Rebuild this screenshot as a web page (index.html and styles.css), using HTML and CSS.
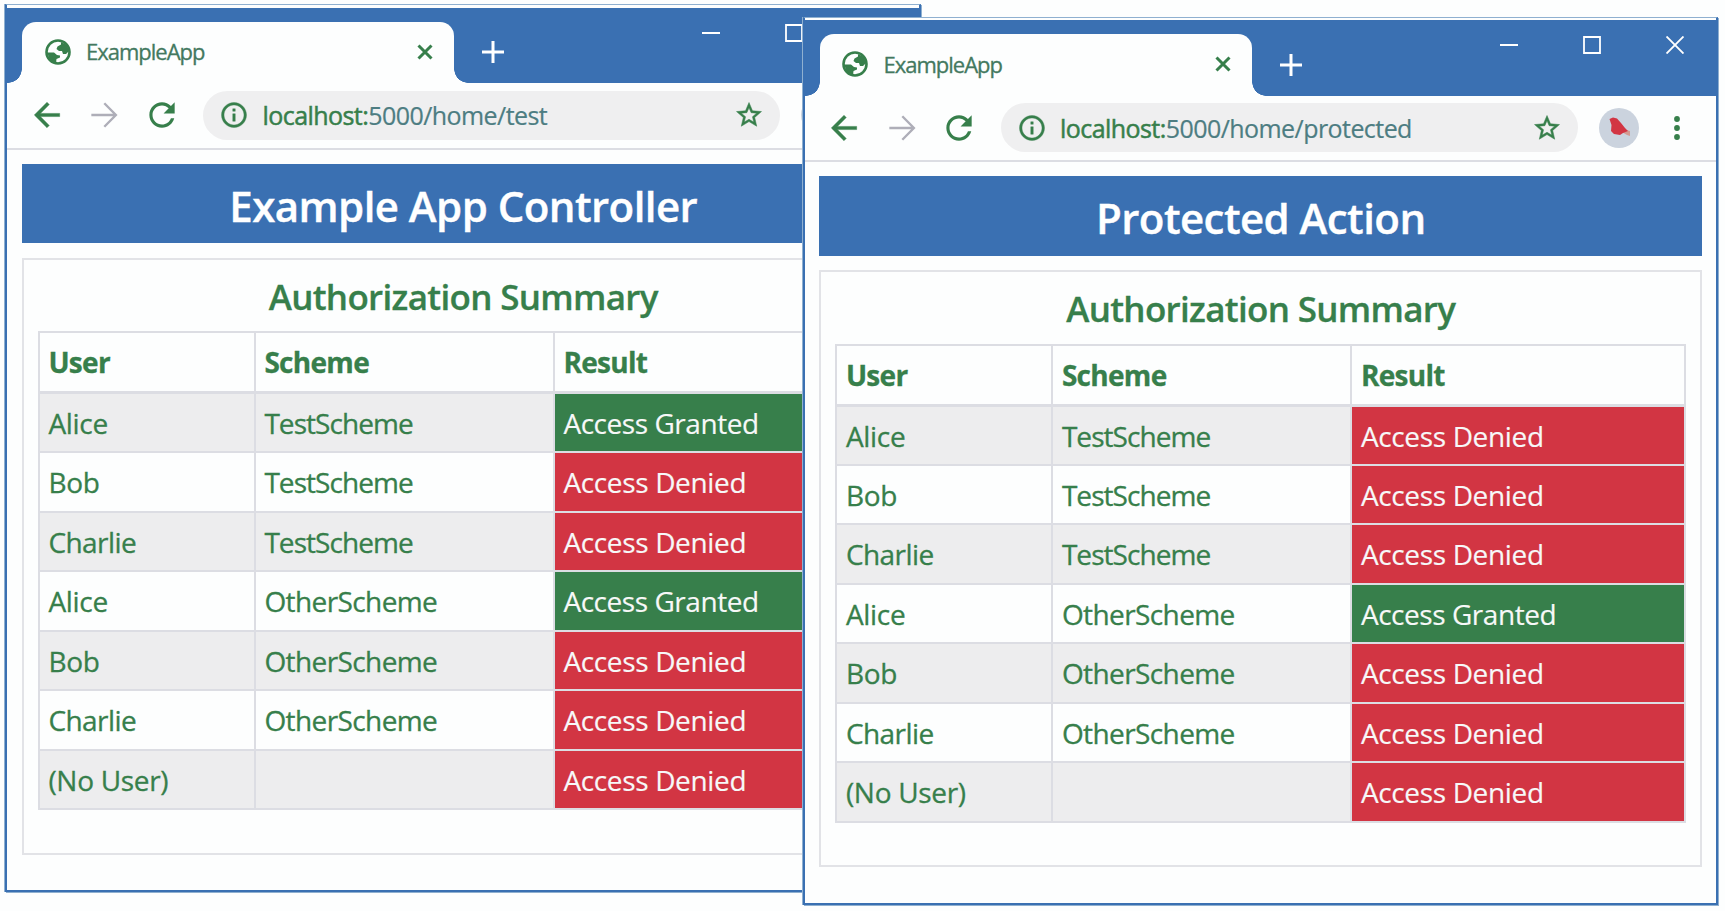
FILE: index.html
```
<!DOCTYPE html>
<html lang="en">
<head>
<meta charset="utf-8">
<title>ExampleApp</title>
<link rel="stylesheet" href="styles.css">
</head>
<body>
<svg class="defs" width="0" height="0">
  <symbol id="globe" viewBox="0 0 26 26"><circle cx="13" cy="13" r="11.5" fill="none" stroke="currentColor" stroke-width="2.6"/><path fill="currentColor" d="M16 3L16 5.500L12.500 7.500L11.500 10L14 12L17 12L18 15L21 15L24 12L22 6Z"/><path fill="currentColor" d="M2 13.500L9 13.500L12 16L15 16.500L15 18.500L11.500 20L11 24L5 21Z"/></symbol>
  <symbol id="close" viewBox="0 0 16 16"><path d="M1.500 1.500L14.500 14.500M14.500 1.500L1.500 14.500" fill="none" stroke="currentColor" stroke-width="3"/></symbol>
  <symbol id="plus" viewBox="0 0 22 22"><path d="M11 0V22M0 11H22" stroke="currentColor" stroke-width="3"/></symbol>
  <symbol id="min" viewBox="0 0 18 18"><path d="M0 9H18" stroke="currentColor" stroke-width="2"/></symbol>
  <symbol id="max" viewBox="0 0 18 18"><path d="M1 1H17V17H1Z" fill="none" stroke="currentColor" stroke-width="1.800"/></symbol>
  <symbol id="exit" viewBox="0 0 18 18"><path d="M.5 .5L17.500 17.500M17.500 .5L.5 17.500" stroke="currentColor" stroke-width="1.900"/></symbol>
  <symbol id="back" viewBox="0 0 24 24"><path fill="currentColor" stroke="currentColor" stroke-width=".3" d="M20 11H7.830l5.590-5.590L12 4l-8 8 8 8 1.410-1.410L7.830 13H20v-2z"/></symbol>
  <symbol id="forward" viewBox="0 0 24 24"><path fill="none" stroke="currentColor" stroke-width="1.500" d="M4 12H19M12.200 4.600L19.500 12L12.200 19.400"/></symbol>
  <symbol id="reload" viewBox="0 0 24 24"><path fill="currentColor" d="M17.650 6.350C16.200 4.900 14.210 4 12 4c-4.420 0-7.990 3.580-7.990 8s3.570 8 7.990 8c3.730 0 6.840-2.550 7.730-6h-2.080c-.82 2.330-3.040 4-5.650 4-3.310 0-6-2.690-6-6s2.690-6 6-6c1.660 0 3.140.69 4.220 1.780L13 11h7V4l-2.350 2.350z"/></symbol>
  <symbol id="info" viewBox="0 0 24 24"><path fill="currentColor" stroke="currentColor" stroke-width=".3" d="M11 7h2v2h-2zm0 4h2v6h-2zm1-9C6.480 2 2 6.480 2 12s4.480 10 10 10 10-4.480 10-10S17.520 2 12 2zm0 18c-4.410 0-8-3.590-8-8s3.590-8 8-8 8 3.590 8 8-3.590 8-8 8z"/></symbol>
  <symbol id="star" viewBox="0 0 24 24"><path fill="currentColor" stroke="currentColor" stroke-width=".4" d="M22 9.240l-7.190-.62L12 2 9.190 8.630 2 9.240l5.460 4.730L5.820 21 12 17.270 18.180 21l-1.630-7.030L22 9.240zM12 15.400l-3.760 2.270 1-4.280-3.320-2.880 4.380-.38L12 6.100l1.710 4.040 4.380.38-3.320 2.880 1 4.280L12 15.400z"/></symbol>
  <symbol id="bird" viewBox="0 0 40 40"><circle cx="20" cy="20" r="20" fill="#cbd3de"/><path fill="#d39a92" d="M24 21L31 23L31 28L28 27L23 24Z"/><path fill="#d23543" d="M10.500 11L14 9.500L18 10.500L22 15L26 20L29 23L24 25L21 27L15 26L12 23L12.500 17Z"/></symbol>
  <symbol id="dots" viewBox="0 0 6 26"><g fill="currentColor"><circle cx="3" cy="4" r="2.900"/><circle cx="3" cy="13" r="2.900"/><circle cx="3" cy="22" r="2.900"/></g></symbol>
</svg>

<section class="window window-test">
  <header class="titlebar">
    <div class="tab"><svg class="i-globe"><use href="#globe"/></svg><span class="tab-name">ExampleApp</span><svg class="i-close"><use href="#close"/></svg></div>
    <svg class="i-plus"><use href="#plus"/></svg>
    <div class="controls"><svg><use href="#min"/></svg><svg><use href="#max"/></svg><svg><use href="#exit"/></svg></div>
  </header>
  <nav class="toolbar">
    <svg class="i-nav"><use href="#back"/></svg><svg class="i-nav dim"><use href="#forward"/></svg><svg class="i-nav"><use href="#reload"/></svg>
    <div class="address"><svg class="i-addr"><use href="#info"/></svg><span class="url"><b>localhost:</b>5000/home/test</span><svg class="i-addr"><use href="#star"/></svg></div>
    <svg class="i-avatar"><use href="#bird"/></svg><svg class="i-dots"><use href="#dots"/></svg>
  </nav>
  <main class="page">
    <h1 class="banner">Example App Controller</h1>
    <div class="card">
      <h2 class="caption">Authorization Summary</h2>
      <div class="table">
        <div class="cell head">User</div><div class="cell head">Scheme</div><div class="cell head">Result</div>
        <div class="cell odd">Alice</div><div class="cell odd scheme">TestScheme</div><div class="cell granted">Access Granted</div>
        <div class="cell">Bob</div><div class="cell scheme">TestScheme</div><div class="cell denied">Access Denied</div>
        <div class="cell odd charlie">Charlie</div><div class="cell odd scheme">TestScheme</div><div class="cell denied">Access Denied</div>
        <div class="cell">Alice</div><div class="cell other">OtherScheme</div><div class="cell granted">Access Granted</div>
        <div class="cell odd">Bob</div><div class="cell odd other">OtherScheme</div><div class="cell denied">Access Denied</div>
        <div class="cell charlie">Charlie</div><div class="cell other">OtherScheme</div><div class="cell denied">Access Denied</div>
        <div class="cell odd">(No User)</div><div class="cell odd"></div><div class="cell denied">Access Denied</div>
      </div>
    </div>
  </main>
</section>

<section class="window window-protected">
  <header class="titlebar">
    <div class="tab"><svg class="i-globe"><use href="#globe"/></svg><span class="tab-name">ExampleApp</span><svg class="i-close"><use href="#close"/></svg></div>
    <svg class="i-plus"><use href="#plus"/></svg>
    <div class="controls"><svg><use href="#min"/></svg><svg><use href="#max"/></svg><svg><use href="#exit"/></svg></div>
  </header>
  <nav class="toolbar">
    <svg class="i-nav"><use href="#back"/></svg><svg class="i-nav dim"><use href="#forward"/></svg><svg class="i-nav"><use href="#reload"/></svg>
    <div class="address"><svg class="i-addr"><use href="#info"/></svg><span class="url"><b>localhost:</b>5000/home/protected</span><svg class="i-addr"><use href="#star"/></svg></div>
    <svg class="i-avatar"><use href="#bird"/></svg><svg class="i-dots"><use href="#dots"/></svg>
  </nav>
  <main class="page">
    <h1 class="banner">Protected Action</h1>
    <div class="card">
      <h2 class="caption">Authorization Summary</h2>
      <div class="table">
        <div class="cell head">User</div><div class="cell head">Scheme</div><div class="cell head">Result</div>
        <div class="cell odd">Alice</div><div class="cell odd scheme">TestScheme</div><div class="cell denied">Access Denied</div>
        <div class="cell">Bob</div><div class="cell scheme">TestScheme</div><div class="cell denied">Access Denied</div>
        <div class="cell odd charlie">Charlie</div><div class="cell odd scheme">TestScheme</div><div class="cell denied">Access Denied</div>
        <div class="cell">Alice</div><div class="cell other">OtherScheme</div><div class="cell granted">Access Granted</div>
        <div class="cell odd">Bob</div><div class="cell odd other">OtherScheme</div><div class="cell denied">Access Denied</div>
        <div class="cell charlie">Charlie</div><div class="cell other">OtherScheme</div><div class="cell denied">Access Denied</div>
        <div class="cell odd">(No User)</div><div class="cell odd"></div><div class="cell denied">Access Denied</div>
      </div>
    </div>
  </main>
</section>
</body>
</html>
```
FILE: styles.css
```
:root {
  --blue: #3a70b2;
  --edge: #8fb0d0;
  --green: #377f4b;
  --red: #d23543;
  --line: #dcdde3;
  --paper: #fdfefe;
}

* { box-sizing: border-box; }

body {
  margin: 0;
  height: 911px;
  position: relative;
  overflow: hidden;
  background: var(--paper);
  color: var(--green);
  font-family: "Open Sans", "Noto Sans", sans-serif;
}

svg { display: block; flex: none; }
.defs { position: absolute; }

/* Overlapping windows on a desktop */
.window {
  position: absolute;
  width: 915.500px;
  height: 888px;
  background: var(--paper);
  border: 2px solid var(--blue);
  border-top: 1px solid var(--edge);
  box-shadow: 1px 1px 0 var(--edge), -1px 0 0 var(--edge);
}
.window-test { left: 5px; top: 4px; }
.window-protected { left: 802.500px; top: 16.500px; }

.titlebar {
  display: flex;
  height: 75.500px;
  margin-top: 2.500px;
  padding-left: 15px;
  background: var(--blue);
  color: #fff;
}
.tab {
  display: flex;
  align-items: center;
  position: relative;
  width: 432px;
  height: 61.500px;
  margin-top: 14px;
  padding: 0 21px 1px 22.500px;
  border-radius: 14px 14px 0 0;
  background: var(--paper);
  color: var(--green);
}
.tab::before, .tab::after {
  content: "";
  position: absolute;
  bottom: 0;
  width: 14px;
  height: 14px;
}
.tab::before { left: -14px; background: radial-gradient(circle at 0 0, transparent 13.500px, var(--paper) 14px); }
.tab::after { right: -14px; background: radial-gradient(circle at 100% 0, transparent 13.500px, var(--paper) 14px); }
.i-globe { width: 26px; height: 26px; }
.tab-name { flex: 1; margin: -1px 0 0 15.500px; font-size: 22px; line-height: 30px; letter-spacing: -1px; color: #43795f; -webkit-text-stroke: .3px; }
.i-close { width: 16px; height: 16px; }
.i-plus { width: 22px; height: 22px; margin: 33.500px 0 0 28px; }
.controls { display: flex; gap: 65px; margin: 16px 32.500px 0 auto; height: 18px; }
.controls svg { width: 18px; height: 18px; }

.toolbar {
  display: flex;
  align-items: center;
  height: 66.500px;
  padding: 0 0 0 20.500px;
  border-bottom: 2px solid var(--line);
}
.i-nav { width: 38px; height: 38px; margin-right: 19.500px; }
.dim { color: #aeaeb8; }
.address {
  display: flex;
  align-items: center;
  width: 577px;
  height: 49px;
  margin-left: 3px;
  padding: 0 16px;
  border-radius: 25px;
  background: #efeff0;
}
.i-addr { width: 30px; height: 30px; }
.url { flex: 1; margin: -.5px 0 0 13.500px; font-size: 25px; line-height: 34px; letter-spacing: -.56px; color: #4d7d82; -webkit-text-stroke: .2px; }
.url b { font-weight: 400; color: var(--green); -webkit-text-stroke: .5px; }
.i-avatar { width: 40px; height: 40px; margin-left: 21px; }
.i-dots { width: 6px; height: 26px; margin-left: 35.500px; }

.page { padding: 14px 14.500px 0 14.500px; }
.banner {
  margin: 0;
  height: 79.500px;
  padding: 2px 0 0 1px;
  background: var(--blue);
  color: #fff;
  font-size: 42px;
  font-weight: 600;
  line-height: 79px;
  letter-spacing: -.55px;
  text-align: center;
  -webkit-text-stroke: .4px;
}
.card {
  height: 597px;
  margin-top: 14.500px;
  padding: 0 14px;
  border: 2px solid #e2e3e7;
}
.caption {
  margin: 0;
  height: 71.500px;
  padding-left: 1px;
  font-size: 35px;
  font-weight: 600;
  line-height: 74px;
  letter-spacing: -.68px;
  text-align: center;
  -webkit-text-stroke: .3px;
}

.table {
  display: grid;
  grid-template-columns: 214px 297px 1fr;
  grid-template-rows: 59px repeat(7, 57.450px);
  gap: 2px;
  padding: 2px;
  background: var(--line);
}
.cell {
  padding-left: 8.900px;
  background: var(--paper);
  font-size: 28px;
  line-height: 58.500px;
  letter-spacing: -.3px;
  white-space: nowrap;
  -webkit-text-stroke: .3px;
}
.head { border-bottom: 1px solid var(--line); font-weight: 700; letter-spacing: -.7px; }
.odd { background: #ededee; }
.charlie { letter-spacing: -.55px; }
.scheme { letter-spacing: -.95px; }
.other { letter-spacing: -.6px; }
.granted, .denied { color: #f7f8f8; -webkit-text-stroke: .15px; }
.granted { background: var(--green); letter-spacing: -.45px; }
.denied { background: var(--red); letter-spacing: -.35px; }
```
